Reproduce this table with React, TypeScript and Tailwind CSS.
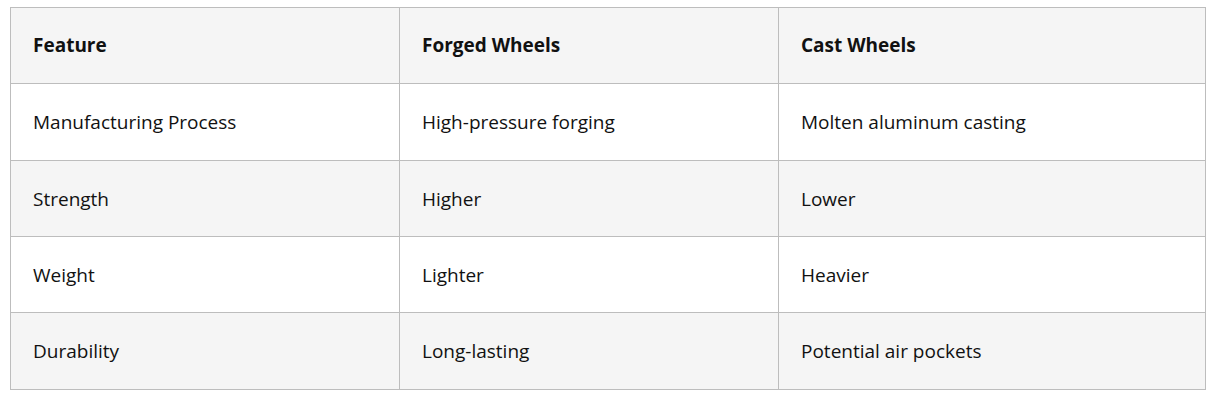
const rows = [
  ["Manufacturing Process", "High-pressure forging", "Molten aluminum casting"],
  ["Strength", "Higher", "Lower"],
  ["Weight", "Lighter", "Heavier"],
  ["Durability", "Long-lasting", "Potential air pockets"],
];

export default function App() {
  return (
    <div className="bg-white pl-[10px] pt-[7px] font-['Open_Sans','Noto_Sans',sans-serif] text-[#111] text-[19px]">
      <table className="border-collapse table-fixed w-[1195px]">
        <colgroup>
          <col className="w-[389px]" />
          <col className="w-[379px]" />
          <col className="w-[427px]" />
        </colgroup>
        <thead>
          <tr className="bg-[#f5f5f5] h-[76px]">
            {["Feature", "Forged Wheels", "Cast Wheels"].map((h) => (
              <th key={h} className="border border-[#bdbdbd] px-[22px] text-left font-bold">
                {h}
              </th>
            ))}
          </tr>
        </thead>
        <tbody>
          {rows.map((r, i) => (
            <tr
              key={r[0]}
              className={`${i === 0 || i === 3 ? "h-[77px]" : "h-[76px]"} ${i % 2 === 1 ? "bg-[#f5f5f5]" : "bg-white"}`}
            >
              {r.map((c) => (
                <td key={c} className="border border-[#bdbdbd] px-[22px] pt-[1px]">
                  {c}
                </td>
              ))}
            </tr>
          ))}
        </tbody>
      </table>
    </div>
  );
}
